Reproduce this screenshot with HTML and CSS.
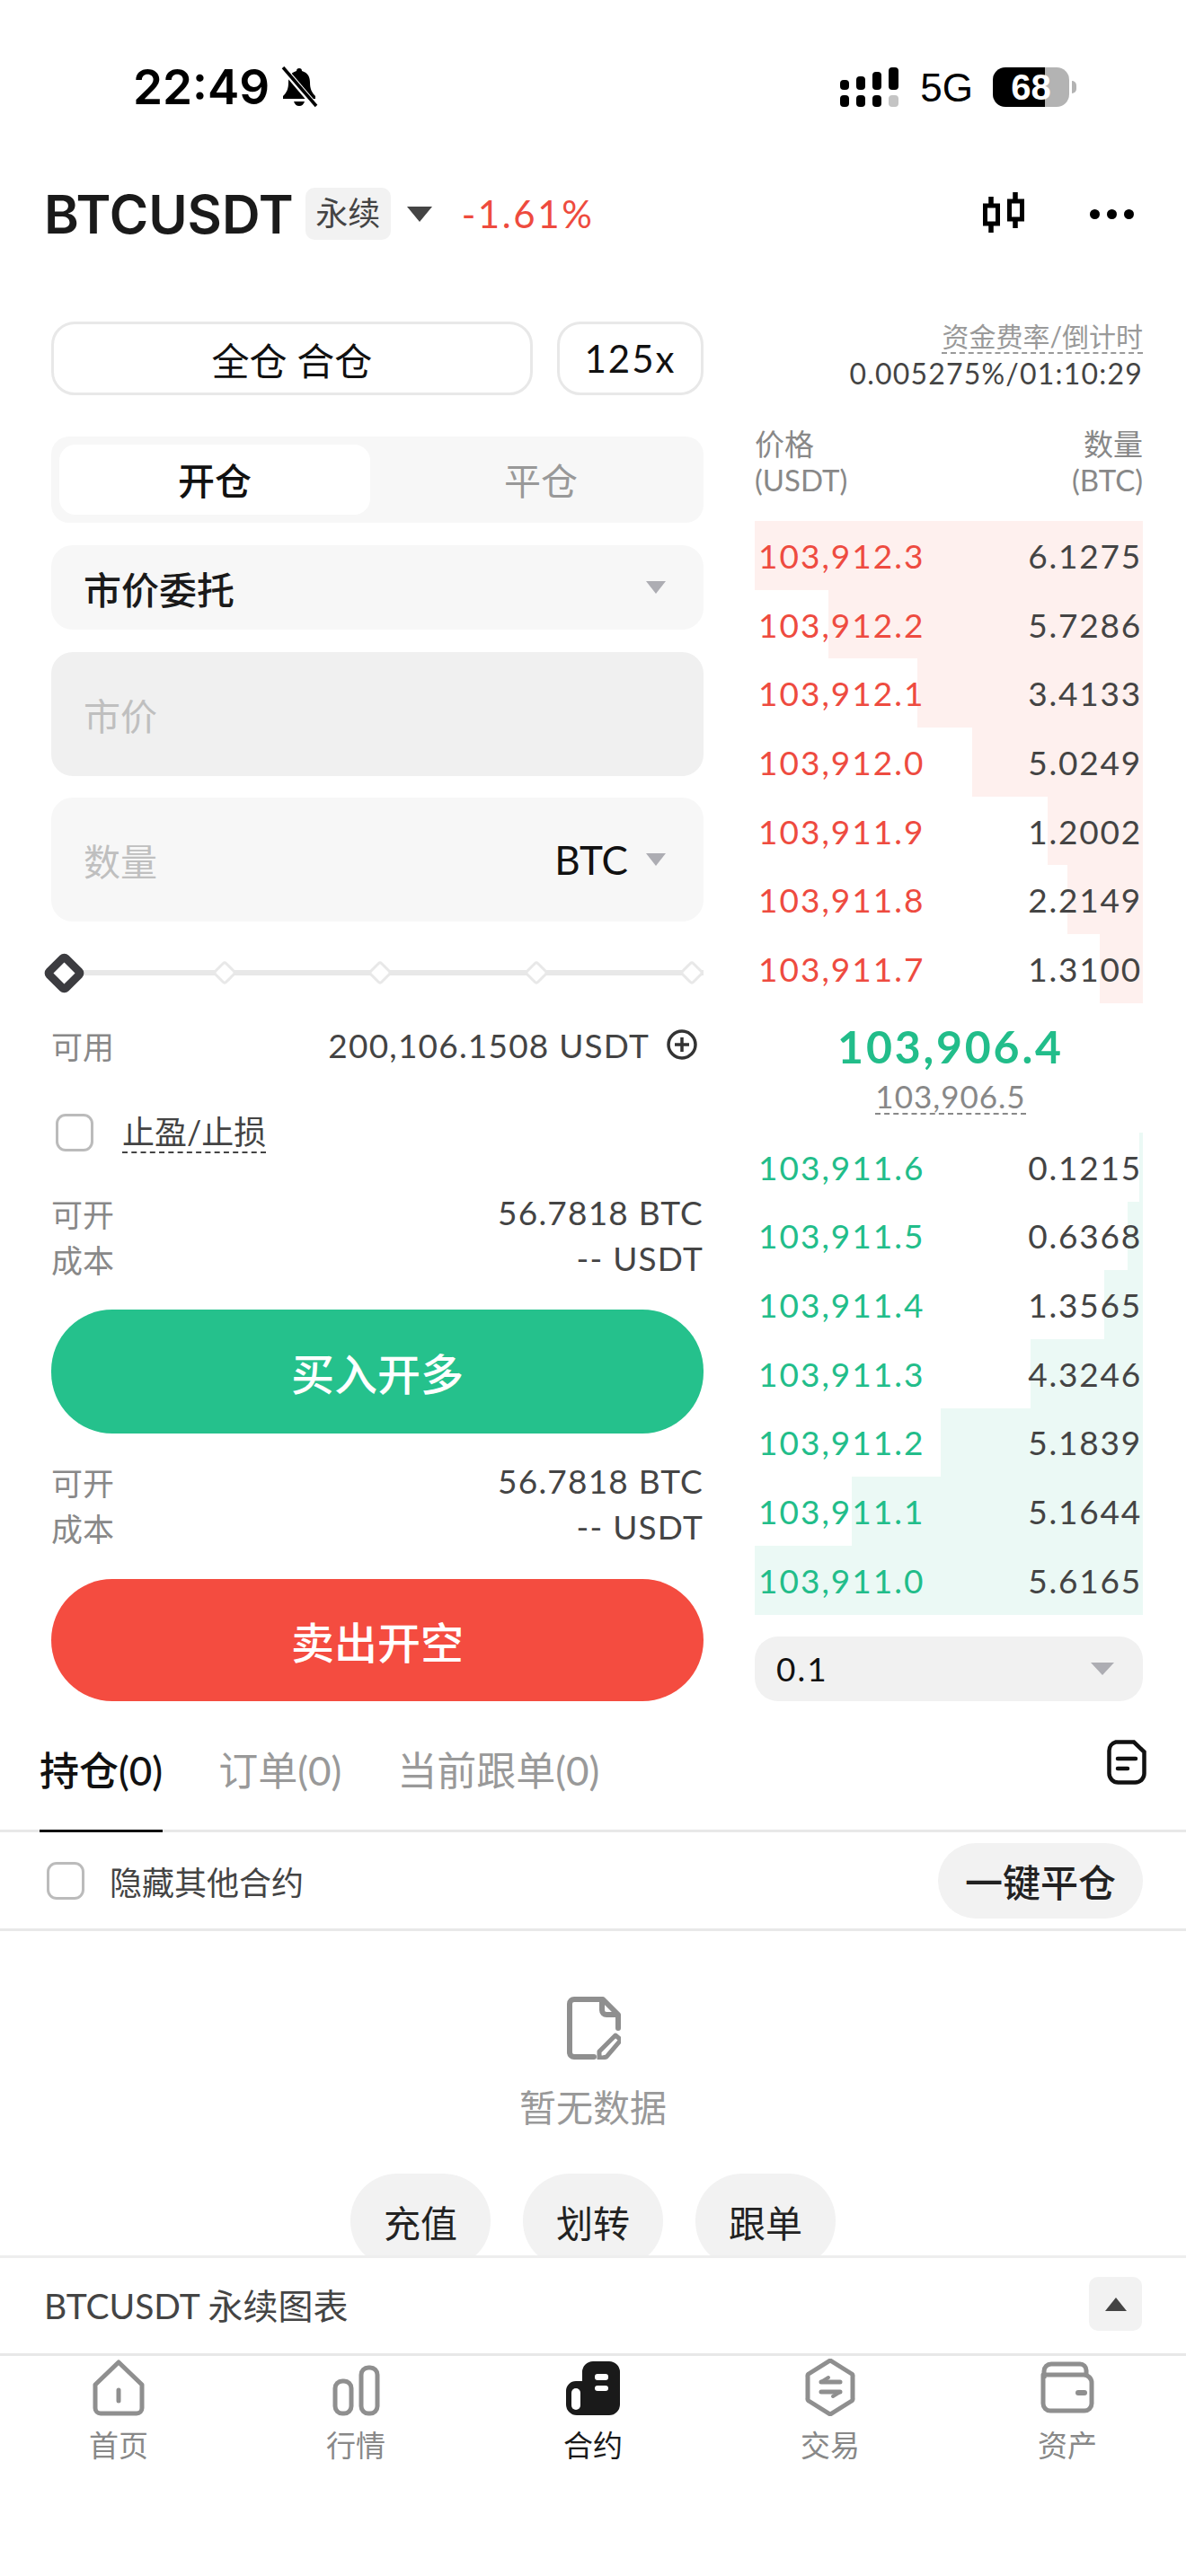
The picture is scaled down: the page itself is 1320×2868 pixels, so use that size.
FILE: index.html
```html
<!DOCTYPE html>
<html lang="zh-CN">

<head>
    <meta charset="UTF-8">
    <meta name="viewport" content="width=device-width, initial-scale=1.0">
    <title>BTCUSDT 永续</title>
    <link rel="stylesheet" href="styles.css">
</head>

<body>
    <div class="status-bar">
        <div class="status-left">
            <span class="clock">22:49</span>
            <svg class="bell" viewBox="0 0 44 46">
                <path d="M22 2c-2 0-3 1-3 3C12 7 10 12 10 18c0 7-2 11-6 15v3h36v-3c-4-4-6-8-6-15 0-6-2-11-9-13 0-2-1-3-3-3z" fill="#000" />
                <path d="M16 39c1 3 3 5 6 5s5-2 6-5z" fill="#000" />
                <path d="M5 3l35 41" stroke="#fff" stroke-width="7" />
                <path d="M4 1l37 43" stroke="#000" stroke-width="3.5" />
            </svg>
        </div>
        <div class="status-right">
            <svg class="signal" viewBox="0 0 66 44">
                <rect x="0" y="14" width="10" height="11" rx="4" />
                <rect x="18" y="10" width="10" height="15" rx="4" />
                <rect x="36" y="5" width="10" height="20" rx="4" />
                <rect x="54" y="0" width="11" height="25" rx="4" />
                <rect x="0" y="31" width="10" height="13" rx="4" />
                <rect x="18" y="31" width="10" height="13" rx="4" />
                <rect x="36" y="31" width="10" height="13" rx="4" />
                <rect x="54" y="31" width="11" height="13" rx="4" fill="#c4c4c4" />
            </svg>
            <span class="net">5G</span>
            <span class="battery">68</span>
            <span class="battery-nub"></span>
        </div>
    </div>

    <header class="header">
        <span class="symbol">BTCUSDT</span>
        <span class="perp-tag">永续</span>
        <span class="caret caret-dark"></span>
        <span class="change">-1.61%</span>
        <svg class="candle-icon" viewBox="0 0 48 46">
            <path d="M9 5v40M36 0v40" stroke="#000" stroke-width="5.5" fill="none" />
            <rect x="2.5" y="15" width="14" height="20" fill="#fff" stroke="#000" stroke-width="5" />
            <rect x="29.5" y="10" width="14" height="20" fill="#fff" stroke="#000" stroke-width="5" />
        </svg>
        <span class="dots"><i></i><i></i><i></i></span>
    </header>

    <div class="trade">
        <div class="form-col">
            <div class="margin-row">
                <button class="outline-btn margin-mode">全仓 合仓</button>
                <button class="outline-btn leverage">125x</button>
            </div>

            <div class="open-close">
                <span class="open-tab active">开仓</span>
                <span class="open-tab">平仓</span>
            </div>

            <div class="field field-select">
                <span class="order-type">市价委托</span>
                <span class="caret"></span>
            </div>
            <div class="field field-disabled">
                <span class="placeholder">市价</span>
            </div>
            <div class="field field-qty">
                <span class="placeholder">数量</span>
                <span class="unit">BTC</span>
                <span class="caret"></span>
            </div>

            <div class="slider">
                <i class="knob"></i>
                <i class="tick"></i>
                <i class="tick"></i>
                <i class="tick"></i>
                <i class="tick"></i>
            </div>

            <div class="avail-row">
                <span class="label">可用</span>
                <span class="avail-value">200,106.1508 USDT
                    <svg class="plus-icon" viewBox="0 0 36 36">
                        <circle cx="18" cy="18" r="15" fill="none" stroke="#333" stroke-width="3.5" />
                        <path d="M18 10v16M10 18h16" stroke="#333" stroke-width="3.5" />
                    </svg>
                </span>
            </div>

            <div class="tp-row">
                <span class="checkbox"></span>
                <span class="tp-label">止盈/止损</span>
            </div>

            <div class="info first">
                <div class="info-row"><span class="label">可开</span><span class="value">56.7818 BTC</span></div>
                <div class="info-row"><span class="label">成本</span><span class="value">-- USDT</span></div>
            </div>
            <button class="action buy">买入开多</button>

            <div class="info second">
                <div class="info-row"><span class="label">可开</span><span class="value">56.7818 BTC</span></div>
                <div class="info-row"><span class="label">成本</span><span class="value">-- USDT</span></div>
            </div>
            <button class="action sell">卖出开空</button>
        </div>

        <div class="book-col">
            <div class="funding">
                <span class="funding-title">资金费率/倒计时</span>
                <span class="funding-value">0.005275%/01:10:29</span>
            </div>

            <div class="book-head">
                <span>价格<br>(USDT)</span>
                <span class="right">数量<br>(BTC)</span>
            </div>

            <div class="book asks">
                <div class="book-row"><i class="depth" style="width:100%"></i><span class="price">103,912.3</span><span class="qty">6.1275</span></div>
                <div class="book-row"><i class="depth" style="width:81%"></i><span class="price">103,912.2</span><span class="qty">5.7286</span></div>
                <div class="book-row"><i class="depth" style="width:58%"></i><span class="price">103,912.1</span><span class="qty">3.4133</span></div>
                <div class="book-row"><i class="depth" style="width:44%"></i><span class="price">103,912.0</span><span class="qty">5.0249</span></div>
                <div class="book-row"><i class="depth" style="width:24.5%"></i><span class="price">103,911.9</span><span class="qty">1.2002</span></div>
                <div class="book-row"><i class="depth" style="width:19.5%"></i><span class="price">103,911.8</span><span class="qty">2.2149</span></div>
                <div class="book-row"><i class="depth" style="width:11%"></i><span class="price">103,911.7</span><span class="qty">1.3100</span></div>
            </div>

            <div class="mid">
                <span class="last-price">103,906.4</span>
                <span class="mark-price">103,906.5</span>
            </div>

            <div class="book bids">
                <div class="book-row"><i class="depth" style="width:1%"></i><span class="price">103,911.6</span><span class="qty">0.1215</span></div>
                <div class="book-row"><i class="depth" style="width:4%"></i><span class="price">103,911.5</span><span class="qty">0.6368</span></div>
                <div class="book-row"><i class="depth" style="width:10%"></i><span class="price">103,911.4</span><span class="qty">1.3565</span></div>
                <div class="book-row"><i class="depth" style="width:29%"></i><span class="price">103,911.3</span><span class="qty">4.3246</span></div>
                <div class="book-row"><i class="depth" style="width:52%"></i><span class="price">103,911.2</span><span class="qty">5.1839</span></div>
                <div class="book-row"><i class="depth" style="width:75%"></i><span class="price">103,911.1</span><span class="qty">5.1644</span></div>
                <div class="book-row"><i class="depth" style="width:100%"></i><span class="price">103,911.0</span><span class="qty">5.6165</span></div>
            </div>

            <div class="depth-select">
                <span>0.1</span>
                <span class="caret caret-wide"></span>
            </div>
        </div>
    </div>

    <div class="pos-tabs">
        <span class="pos-tab active">持仓(0)</span>
        <span class="pos-tab">订单(0)</span>
        <span class="pos-tab">当前跟单(0)</span>
        <svg class="orders-icon" viewBox="0 0 44 50">
            <path d="M10 2.500h20l11.500 11v24a10 10 0 0 1-10 10H12.500a10 10 0 0 1-10-10v-25a10 10 0 0 1 7.500-10z" fill="none" stroke="#111" stroke-width="4.500" />
            <path d="M12 21h20" stroke="#111" stroke-width="4.500" stroke-linecap="round" />
            <path d="M12 32h11" stroke="#111" stroke-width="4.500" stroke-linecap="round" />
        </svg>
    </div>

    <div class="pos-filter">
        <label class="hide-other"><span class="checkbox"></span>隐藏其他合约</label>
        <button class="close-all">一键平仓</button>
    </div>

    <div class="empty">
        <svg class="empty-icon" viewBox="0 0 60 70">
            <path d="M30 67H8a5 5 0 0 1-5-5V8a5 5 0 0 1 5-5h32l17 17v15" fill="none" stroke="#8f8f8f" stroke-width="6" stroke-linecap="round" stroke-linejoin="round" />
            <path d="M39 3v12a5 5 0 0 0 5 5h13" fill="none" stroke="#8f8f8f" stroke-width="6" stroke-linejoin="round" />
            <path d="M54 43l6 5-16 19-8 2v-8z" fill="none" stroke="#8f8f8f" stroke-width="5" stroke-linejoin="round" />
        </svg>
        <p class="empty-text">暂无数据</p>
        <div class="empty-actions">
            <button class="pill">充值</button>
            <button class="pill">划转</button>
            <button class="pill">跟单</button>
        </div>
    </div>

    <div class="chart-bar">
        <span class="chart-title">BTCUSDT 永续图表</span>
        <span class="chart-toggle"><i class="caret-up"></i></span>
    </div>

    <nav class="tabbar">
        <div class="tab-item">
            <svg viewBox="0 0 64 64">
                <path d="M32 4L58 29v26a6 6 0 0 1-6 6H12a6 6 0 0 1-6-6V29z" fill="none" stroke="#8f8f8f" stroke-width="5" stroke-linejoin="round" />
                <path d="M32 35v12" stroke="#8f8f8f" stroke-width="5" stroke-linecap="round" />
            </svg>
            <span>首页</span>
        </div>
        <div class="tab-item">
            <svg viewBox="0 0 64 64">
                <rect x="9" y="25" width="18" height="36" rx="8" fill="none" stroke="#8f8f8f" stroke-width="5" />
                <rect x="38" y="10" width="18" height="51" rx="8" fill="none" stroke="#8f8f8f" stroke-width="5" />
            </svg>
            <span>行情</span>
        </div>
        <div class="tab-item active">
            <svg viewBox="0 0 64 64">
                <path d="M20 15A12 12 0 0 1 32 3h18a12 12 0 0 1 12 12v36a12 12 0 0 1-12 12H14A12 12 0 0 1 2 51V36a11 11 0 0 1 11-11h7z" fill="#1a1a1a" />
                <rect x="8" y="33" width="10" height="24" rx="5" fill="#fff" />
                <rect x="34" y="17" width="15" height="7" rx="3" fill="#fff" />
                <rect x="34" y="30" width="15" height="6" rx="3" fill="#fff" />
            </svg>
            <span>合约</span>
        </div>
        <div class="tab-item">
            <svg viewBox="0 0 64 64">
                <path d="M32 2l24 15a3 3 0 0 1 1 3v24a3 3 0 0 1-1 3L32 62 8 47a3 3 0 0 1-1-3V20a3 3 0 0 1 1-3z" fill="none" stroke="#8f8f8f" stroke-width="5" stroke-linejoin="round" />
                <path d="M22 26h21M22 37h21" stroke="#8f8f8f" stroke-width="5" stroke-linecap="round" />
                <path d="M30 21l-8 5M35 42l8-5" stroke="#8f8f8f" stroke-width="4" stroke-linecap="round" />
            </svg>
            <span>交易</span>
        </div>
        <div class="tab-item">
            <svg viewBox="0 0 64 64">
                <path d="M6 22v-8a8 8 0 0 1 8-8h32a7 7 0 0 1 7 7v7" fill="none" stroke="#8f8f8f" stroke-width="5" />
                <path d="M12 18h38a9 9 0 0 1 9 9v23a8 8 0 0 1-8 8H13a8 8 0 0 1-8-8V18z" fill="none" stroke="#8f8f8f" stroke-width="5" stroke-linejoin="round" />
                <path d="M44 38h7" stroke="#8f8f8f" stroke-width="6" stroke-linecap="round" />
            </svg>
            <span>资产</span>
        </div>
    </nav>
</body>

</html>
```

FILE: styles.css
```css
* {
    box-sizing: border-box;
}

body {
    font-family: Lato, "Noto Sans CJK SC", sans-serif;
    margin: 0;
    width: 1320px;
    height: 2868px;
    overflow: hidden;
    background-color: white;
    color: #111;
}

button {
    font-family: inherit;
    border: none;
    padding: 0;
}

/* status bar */
.status-bar {
    height: 190px;
    display: flex;
    justify-content: space-between;
    align-items: flex-start;
    padding: 74px 122px 0 148px;
}

.status-left,
.status-right {
    display: flex;
    align-items: center;
    height: 46px;
}

.clock {
    font-family: Inter, sans-serif;
    font-size: 53px;
    font-weight: 600;
    color: #000;
}

.bell {
    width: 44px;
    height: 46px;
    margin-left: 11px;
}

.signal {
    width: 66px;
    height: 44px;
    margin-left: 3px;
}

.net {
    font-family: "Liberation Sans", sans-serif;
    font-size: 44px;
    color: #000;
    margin: 2px 22px 0 23px;
}

.battery {
    width: 85px;
    height: 44px;
    border-radius: 14px;
    background: linear-gradient(90deg, #000 68%, #b3b3b3 68%);
    color: white;
    font-family: "Liberation Sans", sans-serif;
    font-size: 40px;
    font-weight: bold;
    line-height: 44px;
    text-align: center;
}

.battery-nub {
    width: 5px;
    height: 14px;
    margin-left: 3px;
    background-color: #b3b3b3;
    border-radius: 0 6px 6px 0;
}

/* header */
.header {
    height: 96px;
    display: flex;
    align-items: center;
    padding: 0 58px 0 49px;
}

.symbol {
    font-family: Inter, sans-serif;
    font-size: 59px;
    font-weight: 600;
    color: #1a1a1a;
}

.perp-tag {
    margin-left: 13px;
    width: 95px;
    height: 58px;
    line-height: 56px;
    text-align: center;
    font-size: 36px;
    color: #444;
    background-color: #f2f2f2;
    border-radius: 10px;
}

.caret {
    width: 0;
    height: 0;
    border-left: 11px solid transparent;
    border-right: 11px solid transparent;
    border-top: 14px solid #adadb3;
}

.caret-dark {
    margin-left: 18px;
    border-left-width: 14px;
    border-right-width: 14px;
    border-top: 17px solid #444;
}

.caret-wide {
    border-left-width: 13px;
    border-right-width: 13px;
}

.change {
    margin-left: 33px;
    font-size: 42px;
    letter-spacing: 2.600px;
    color: #ee4b3e;
}

.candle-icon {
    width: 48px;
    height: 46px;
    margin-left: auto;
    margin-right: 71px;
    margin-top: -2px;
}

.dots {
    display: flex;
    gap: 8px;
}

.dots i {
    width: 11px;
    height: 11px;
    border-radius: 50%;
    background-color: #000;
}

/* trade area */
.trade {
    display: flex;
    height: 1614px;
    padding: 72px 48px 0 57px;
    gap: 57px;
}

.form-col {
    width: 726px;
}

.book-col {
    width: 432px;
}

.margin-row {
    display: flex;
    gap: 27px;
}

.outline-btn {
    height: 82px;
    background-color: white;
    border: 3px solid #e8e8e8;
    border-radius: 26px;
    font-size: 42px;
    color: #111;
}

.margin-mode {
    width: 536px;
}

.leverage {
    width: 163px;
    letter-spacing: 2px;
}

.open-close {
    margin-top: 46px;
    height: 96px;
    padding: 9px;
    display: flex;
    background-color: #f7f7f7;
    border-radius: 20px;
}

.open-tab {
    width: 346px;
    line-height: 81px;
    height: 78px;
    text-align: center;
    font-size: 41px;
    color: #999;
    border-radius: 18px;
}

.open-tab:nth-child(2) {
    width: 362px;
    padding-left: 18px;
}

.open-tab.active {
    background-color: white;
    color: #111;
    font-weight: 500;
}

.field {
    display: flex;
    align-items: center;
    padding: 0 42px 0 36px;
    border-radius: 24px;
    font-size: 41px;
    background-color: #f7f7f7;
}

.field-select {
    margin-top: 25px;
    height: 94px;
    justify-content: space-between;
}

.order-type {
    font-size: 42px;
    font-weight: 500;
    color: #1a1a1a;
}

.field-disabled {
    margin-top: 25px;
    height: 138px;
    background-color: #f0f0f0;
}

.field-qty {
    margin-top: 24px;
    height: 138px;
}

.placeholder {
    color: #bfbfbf;
    flex: 1;
}

.unit {
    color: #111;
    font-size: 44px;
    margin-right: 20px;
}

.slider {
    position: relative;
    margin-top: 34px;
    height: 46px;
    display: flex;
    justify-content: space-between;
    align-items: center;
}

.slider::before {
    content: "";
    position: absolute;
    left: 0;
    right: 0;
    top: 20px;
    height: 6px;
    background-color: #e8e8e8;
}

.knob,
.tick {
    position: relative;
    display: block;
    transform: rotate(45deg);
    background-color: white;
}

.knob {
    width: 35px;
    height: 35px;
    margin-left: -3px;
    border: 9px solid #3c3c40;
    border-radius: 7px;
}

.tick {
    width: 20px;
    height: 20px;
    margin-right: 3px;
    border: 3px solid #e8e8e8;
    border-radius: 4px;
}

.avail-row,
.info-row {
    display: flex;
    justify-content: space-between;
    align-items: center;
}

.avail-row {
    margin-top: 35px;
    height: 44px;
}

.label {
    font-size: 35px;
    color: #888;
}

.avail-value,
.value {
    font-size: 37px;
    letter-spacing: 1.200px;
    color: #444;
}

.value {
    margin-top: -3px;
}

.avail-value {
    display: flex;
    align-items: center;
    gap: 18px;
    padding-right: 6px;
}

.plus-icon {
    width: 36px;
    height: 36px;
}

.tp-row {
    margin-top: 54px;
    height: 44px;
    display: flex;
    align-items: center;
    padding-left: 5px;
}

.checkbox {
    flex: none;
    width: 42px;
    height: 42px;
    border: 3px solid #bbb;
    border-radius: 11px;
    background-color: white;
}

.tp-label {
    margin-left: 32px;
    font-size: 36px;
    line-height: 44px;
    color: #444;
    border-bottom: 2px dashed #444;
}

.info.first {
    margin-top: 42px;
}

.info.second {
    margin-top: 28px;
}

.info-row {
    height: 51px;
}

.action {
    display: block;
    width: 100%;
    color: white;
    font-size: 48px;
    font-weight: 500;
    border-radius: 68px;
}

.buy {
    margin-top: 31px;
    height: 138px;
    background-color: #25c18c;
}

.sell {
    margin-top: 32px;
    height: 136px;
    background-color: #f44c40;
}

/* order book */
.funding {
    height: 82px;
    display: flex;
    flex-direction: column;
    align-items: flex-end;
}

.funding-title {
    font-size: 30px;
    line-height: 32px;
    color: #999;
    border-bottom: 2px dashed #999;
    padding-bottom: 2px;
}

.funding-value {
    margin-top: 3px;
    font-size: 32px;
    line-height: 38px;
    letter-spacing: 1.200px;
    color: #444;
}

.book-head {
    margin-top: 34px;
    height: 106px;
    display: flex;
    justify-content: space-between;
    font-size: 33px;
    line-height: 40px;
    color: #888;
}

.book-head .right {
    text-align: right;
}

.book-row {
    position: relative;
    height: 76.7px;
    display: flex;
    justify-content: space-between;
    align-items: center;
    padding: 0 1px 0 4px;
    font-size: 37px;
    letter-spacing: 2px;
}

.depth {
    position: absolute;
    top: 0;
    right: 0;
    bottom: 0;
}

.price,
.qty {
    position: relative;
}

.qty {
    color: #444;
    letter-spacing: 1.800px;
}

.asks .depth {
    background-color: #fef0ee;
}

.asks .price {
    color: #ee4b40;
}

.bids .depth {
    background-color: #ebf9f5;
}

.bids .price {
    color: #22bd8a;
}

.mid {
    height: 144px;
    display: flex;
    flex-direction: column;
    align-items: center;
    padding: 20px 0 0 4px;
}

.last-price {
    font-size: 50px;
    line-height: 56px;
    font-weight: bold;
    letter-spacing: 2.800px;
    color: #22bd8a;
}

.mark-price {
    margin-top: 8px;
    font-size: 35px;
    line-height: 38px;
    letter-spacing: 1px;
    color: #888;
    border-bottom: 2px dashed #888;
}

.depth-select {
    margin-top: 24px;
    height: 72px;
    display: flex;
    justify-content: space-between;
    align-items: center;
    padding: 0 32px 0 24px;
    font-size: 37px;
    letter-spacing: 2px;
    background-color: #f1f1f1;
    border-radius: 26px;
}

/* positions */
.pos-tabs {
    height: 140px;
    display: flex;
    align-items: flex-end;
    padding: 0 44px;
    border-bottom: 3px solid #e8e8e8;
    gap: 62px;
}

.pos-tab {
    position: relative;
    font-size: 44px;
    line-height: 142px;
    height: 137px;
    color: #999;
}

.pos-tab.active {
    color: #111;
    font-weight: 500;
}

.pos-tab.active::after {
    content: "";
    position: absolute;
    left: 0;
    right: 0;
    bottom: -3px;
    height: 3px;
    background-color: #111;
}

.orders-icon {
    width: 44px;
    height: 50px;
    margin-left: auto;
    align-self: flex-start;
    margin-top: 37px;
}

.pos-filter {
    height: 110px;
    display: flex;
    justify-content: space-between;
    align-items: center;
    padding: 0 48px 0 52px;
    border-bottom: 3px solid #e8e8e8;
}

.hide-other {
    display: flex;
    align-items: center;
    gap: 28px;
    font-size: 36px;
    color: #444;
}

.close-all {
    width: 228px;
    height: 84px;
    border-radius: 42px;
    background-color: #f2f2f2;
    font-size: 42px;
    font-weight: 500;
    color: #222;
}

.empty {
    height: 361px;
    overflow: hidden;
    display: flex;
    flex-direction: column;
    align-items: center;
    padding-top: 73px;
}

.empty-icon {
    flex: none;
    width: 60px;
    height: 70px;
    margin-left: 2px;
}

.empty-text {
    flex: none;
    margin: 26px 0 0;
    font-size: 41px;
    line-height: 56px;
    color: #999;
}

.empty-actions {
    flex: none;
    margin-top: 45px;
    display: flex;
    gap: 36px;
}

.pill {
    flex: none;
    width: 156px;
    height: 105px;
    border-radius: 52px;
    background-color: #f2f2f2;
    font-size: 41px;
    color: #222;
}

.chart-bar {
    height: 112px;
    display: flex;
    justify-content: space-between;
    align-items: center;
    padding: 0 49px 4px;
    border-top: 3px solid #eee;
    border-bottom: 3px solid #e8e8e8;
}

.chart-title {
    font-size: 39px;
    color: #444;
}

.chart-toggle {
    width: 59px;
    height: 60px;
    display: flex;
    justify-content: center;
    align-items: center;
    background-color: #f2f2f2;
    border-radius: 10px;
}

.caret-up {
    width: 0;
    height: 0;
    border-left: 12px solid transparent;
    border-right: 12px solid transparent;
    border-bottom: 15px solid #444;
}

.tabbar {
    display: grid;
    grid-template-columns: repeat(5, 264px);
    padding-top: 3px;
}

.tab-item {
    display: flex;
    flex-direction: column;
    align-items: center;
    font-size: 33px;
    color: #888;
}

.tab-item svg {
    width: 64px;
    height: 64px;
}

.tab-item span {
    margin-top: 10px;
    line-height: 44px;
}

.tab-item.active {
    color: #1a1a1a;
}
```
